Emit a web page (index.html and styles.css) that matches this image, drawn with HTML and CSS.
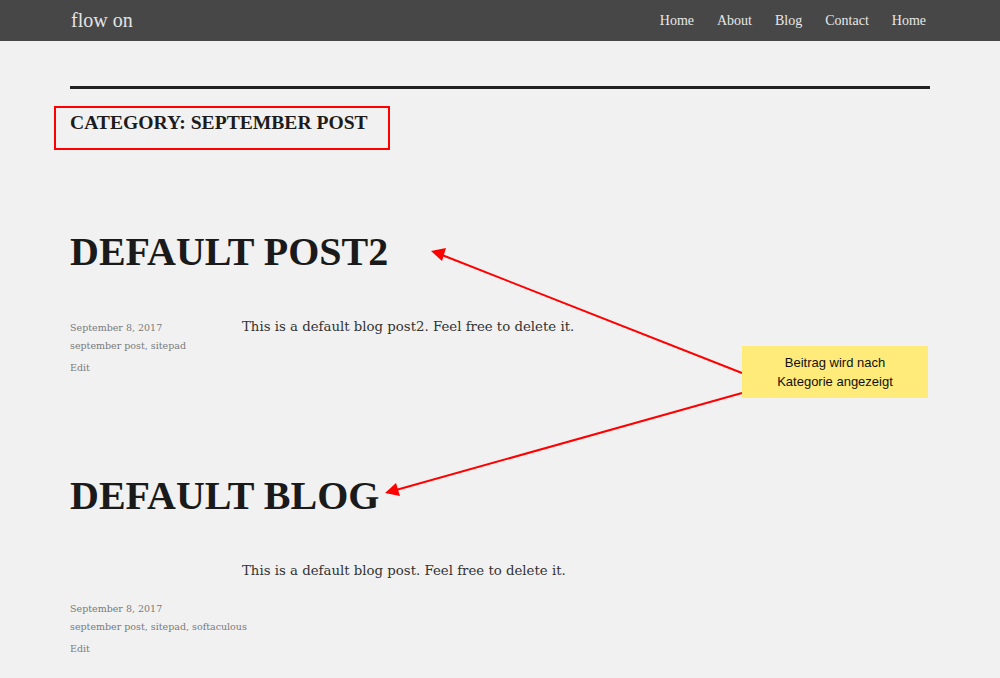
FILE: index.html
```html
<!DOCTYPE html>
<html lang="en">
<head>
    <meta charset="UTF-8">
    <meta name="viewport" content="width=device-width, initial-scale=1.0">
    <title>September Post – flow on</title>
    <link rel="stylesheet" href="styles.css">
</head>
<body>
    <div class="page">
        <header class="site-header">
            <div class="container header-inner">
                <a class="logo" href="#">flow on</a>
                <nav class="main-nav">
                    <a href="#">Home</a>
                    <a href="#">About</a>
                    <a href="#">Blog</a>
                    <a href="#">Contact</a>
                    <a href="#">Home</a>
                </nav>
            </div>
        </header>

        <main class="container">
            <hr class="rule">
            <h1 class="archive-title">CATEGORY: SEPTEMBER POST</h1>

            <article class="post">
                <h2 class="post-title">DEFAULT POST2</h2>
                <div class="post-body">
                    <div class="post-meta first">
                        <span>September 8, 2017</span>
                        <span>september post, sitepad</span>
                        <span class="edit">Edit</span>
                    </div>
                    <p class="post-text">This is a default blog post2. Feel free to delete it.</p>
                </div>
            </article>

            <article class="post second">
                <h2 class="post-title">DEFAULT BLOG</h2>
                <p class="post-text indented">This is a default blog post. Feel free to delete it.</p>
                <div class="post-meta">
                    <span>September 8, 2017</span>
                    <span>september post, sitepad, softaculous</span>
                    <span class="edit">Edit</span>
                </div>
            </article>
        </main>

        <!-- annotations drawn over the screenshot -->
        <div class="mark-box"></div>
        <svg class="arrows" width="1000" height="678" viewBox="0 0 1000 678">
            <line x1="742" y1="373" x2="442" y2="255" stroke="#f00" stroke-width="2"/>
            <polygon points="431,251 446,248 442,261" fill="#f00"/>
            <line x1="742" y1="393" x2="396" y2="490" stroke="#f00" stroke-width="2"/>
            <polygon points="385,493 396,483 400,496" fill="#f00"/>
        </svg>
        <div class="note">Beitrag wird nach<br>Kategorie angezeigt</div>
    </div>
</body>
</html>
```

FILE: styles.css
```css
body {
    margin: 0;
    background: #f1f1f1;
    font-family: "Liberation Serif", "Times New Roman", serif;
    color: #333;
}
.page {
    position: relative;
    min-height: 678px;
}
.container {
    width: 860px;
    margin: 0 auto;
}
.site-header {
    background: #474747;
    height: 41px;
}
.header-inner {
    display: flex;
    justify-content: space-between;
    align-items: center;
    height: 41px;
}
.logo {
    color: #e4e4e4;
    font-size: 20px;
    text-decoration: none;
    margin-left: 1px;
}
.main-nav {
    display: flex;
    gap: 23px;
    margin-right: 4px;
}
.main-nav a {
    color: #e8e8e8;
    font-size: 14px;
    text-decoration: none;
}
.rule {
    margin: 45px 0 0;
    border: none;
    border-top: 3px solid #222;
}
.archive-title {
    margin: 22px 0 0;
    font-size: 19.6px;
    line-height: 24px;
    color: #1c1c1c;
}
.post-title {
    margin: 93px 0 0;
    font-size: 40px;
    line-height: 48px;
    color: #1a1a1a;
}
.post.second .post-title {
    margin-top: 95px;
}
.post-body {
    display: flex;
    margin-top: 39px;
}
.post-meta {
    display: flex;
    flex-direction: column;
    flex-shrink: 0;
    width: 172px;
    white-space: nowrap;
    font-family: "DejaVu Serif", serif;
    font-size: 9.5px;
    line-height: 18px;
    color: #7a7a7a;
}
.post-meta.first {
    padding-top: 4px;
}
.post-meta .edit {
    margin-top: 4px;
}
.post-text {
    margin: 0;
    font-family: "DejaVu Serif", serif;
    font-size: 13.3px;
    line-height: 24px;
    color: #333;
}
.post-text.indented {
    margin: 39px 0 17px 172px;
}
.mark-box {
    position: absolute;
    left: 54px;
    top: 106px;
    width: 332px;
    height: 40px;
    border: 2px solid #f00;
}
.arrows {
    position: absolute;
    left: 0;
    top: 0;
    pointer-events: none;
}
.note {
    position: absolute;
    left: 742px;
    top: 346px;
    width: 186px;
    height: 52px;
    padding-top: 7px;
    box-sizing: border-box;
    background: #ffeb7a;
    font-family: "Liberation Sans", Arial, sans-serif;
    font-size: 13px;
    line-height: 19px;
    text-align: center;
    color: #111;
}
```
